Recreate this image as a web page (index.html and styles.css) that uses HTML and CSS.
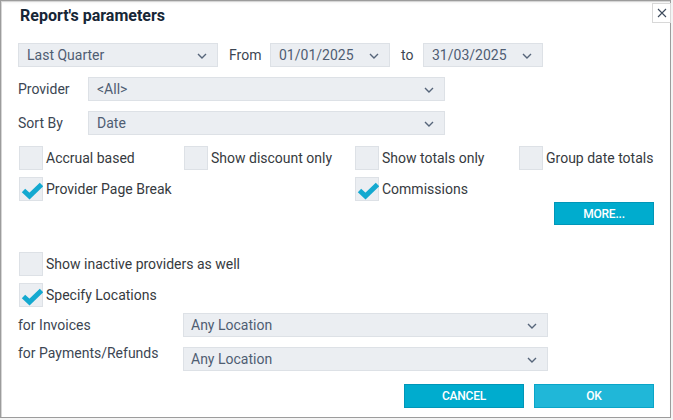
FILE: index.html
```html
<!DOCTYPE html>
<html>
<head>
<meta charset="utf-8">
<link rel="stylesheet" href="styles.css">
</head>
<body>
<div class="dialog">
  <button class="close" aria-label="Close">
    <svg width="10" height="10" viewBox="0 0 10 10"><path d="M1 1L9 9M9 1L1 9" stroke="#3d4a5c" stroke-width="1.1" fill="none"/></svg>
  </button>
  <div class="title">Report's parameters</div>

  <div class="row row1">
    <div class="select w-period"><span>Last Quarter</span><svg class="chev" width="10" height="6" viewBox="0 0 10 6"><path d="M1 1L5 5L9 1" stroke="#56657a" stroke-width="1.4" fill="none"/></svg></div>
    <span class="lbl-from">From</span>
    <div class="select w-date"><span>01/01/2025</span><svg class="chev" width="10" height="6" viewBox="0 0 10 6"><path d="M1 1L5 5L9 1" stroke="#56657a" stroke-width="1.4" fill="none"/></svg></div>
    <span class="lbl-to">to</span>
    <div class="select w-date"><span>31/03/2025</span><svg class="chev" width="10" height="6" viewBox="0 0 10 6"><path d="M1 1L5 5L9 1" stroke="#56657a" stroke-width="1.4" fill="none"/></svg></div>
  </div>

  <div class="row row-provider">
    <span class="lbl-field">Provider</span>
    <div class="select w-wide"><span>&lt;All&gt;</span><svg class="chev" width="10" height="6" viewBox="0 0 10 6"><path d="M1 1L5 5L9 1" stroke="#56657a" stroke-width="1.4" fill="none"/></svg></div>
  </div>

  <div class="row row-sort">
    <span class="lbl-field">Sort By</span>
    <div class="select w-wide"><span>Date</span><svg class="chev" width="10" height="6" viewBox="0 0 10 6"><path d="M1 1L5 5L9 1" stroke="#56657a" stroke-width="1.4" fill="none"/></svg></div>
  </div>

  <div class="checks">
    <label class="cb"><span class="box"></span><span>Accrual based</span></label>
    <label class="cb"><span class="box"></span><span>Show discount only</span></label>
    <label class="cb"><span class="box"></span><span>Show totals only</span></label>
    <label class="cb"><span class="box"></span><span>Group date totals</span></label>
    <label class="cb"><span class="box"><svg width="24" height="24" viewBox="0 0 24 24"><path d="M4.5 13.5L10.5 19L22.5 7.5" stroke="#14a9d0" stroke-width="5" fill="none"/></svg></span><span>Provider Page Break</span></label>
    <span></span>
    <label class="cb"><span class="box"><svg width="24" height="24" viewBox="0 0 24 24"><path d="M4.5 13.5L10.5 19L22.5 7.5" stroke="#14a9d0" stroke-width="5" fill="none"/></svg></span><span>Commissions</span></label>
    <span></span>
  </div>

  <div class="more-row">
    <button class="btn btn-more">MORE...</button>
  </div>

  <label class="cb cb-single inactive"><span class="box"></span><span>Show inactive providers as well</span></label>
  <label class="cb cb-single specify"><span class="box"><svg width="24" height="24" viewBox="0 0 24 24"><path d="M4.5 13.5L10.5 19L22.5 7.5" stroke="#14a9d0" stroke-width="5" fill="none"/></svg></span><span>Specify Locations</span></label>

  <div class="row loc-row loc-inv">
    <span class="lbl-loc">for Invoices</span>
    <div class="select w-loc"><span>Any Location</span><svg class="chev" width="10" height="6" viewBox="0 0 10 6"><path d="M1 1L5 5L9 1" stroke="#56657a" stroke-width="1.4" fill="none"/></svg></div>
  </div>
  <div class="row loc-row loc-pay">
    <span class="lbl-loc lbl-top">for Payments/Refunds</span>
    <div class="select w-loc"><span>Any Location</span><svg class="chev" width="10" height="6" viewBox="0 0 10 6"><path d="M1 1L5 5L9 1" stroke="#56657a" stroke-width="1.4" fill="none"/></svg></div>
  </div>

  <div class="actions">
    <button class="btn btn-cancel">CANCEL</button>
    <button class="btn btn-ok">OK</button>
  </div>
</div>
</body>
</html>
```
FILE: styles.css
```css
html, body {
  margin: 0;
  padding: 0;
  background: #f4f4f4;
}
body {
  font-family: Roboto, "Liberation Sans", Arial, sans-serif;
  font-size: 14px;
  color: #363a40;
}
.dialog {
  position: relative;
  box-sizing: border-box;
  width: 671px;
  height: 418px;
  background: #fff;
  border: 1px solid #9c9c9c;
  box-shadow: inset 1px 1px 0 #d6d6d6, inset 0 3px 3px -2px #e6e6e6;
  padding: 0 16px 0 17px;
}
.close {
  position: absolute;
  top: 2px;
  right: -1px;
  width: 19px;
  height: 20px;
  border: 1px solid #d8d8d8;
  background: #fff;
  padding: 0;
  display: flex;
  align-items: center;
  justify-content: center;
}
.title {
  height: 42px;
  box-sizing: border-box;
  padding: 5px 0 0 2px;
  font-size: 16px;
  font-weight: 700;
  line-height: 20px;
  color: #162636;
}
.row {
  display: flex;
  align-items: center;
}
.select {
  box-sizing: border-box;
  height: 24px;
  background: #ebeef2;
  border: 1px solid #dde1e6;
  display: flex;
  align-items: center;
  justify-content: space-between;
  padding: 0 10px 0 8px;
  color: #4f5d72;
  font-size: 14px;
}
.chev { flex: none; margin-top: 1px; }
.w-period { width: 200px; }
.w-date { width: 120px; padding-left: 8px; }
.w-wide { width: 357px; }
.w-loc { width: 365px; padding-left: 7px; }
.lbl-from { width: 41px; margin-left: 11px; color: #3c4653; }
.lbl-to { width: 22px; margin-left: 11px; color: #3c4653; }
.lbl-field { width: 70px; color: #3c4653; }
.lbl-loc { width: 165px; color: #3c4653; }
.lbl-top { align-self: flex-start; margin-top: -2px; }
.row-provider { margin-top: 10px; }
.row-sort { margin-top: 10px; }
.checks {
  margin-top: 11px;
  padding-left: 1px;
  display: grid;
  grid-template-columns: 165px 171px 164px 1fr;
  row-gap: 7px;
}
.cb {
  display: flex;
  align-items: center;
  color: #363a40;
  white-space: nowrap;
}
.box {
  box-sizing: border-box;
  width: 24px;
  height: 24px;
  flex: none;
  background: #ebeef2;
  border: 1px solid #dde1e6;
  margin-right: 3px;
  position: relative;
}
.box svg {
  position: absolute;
  left: -1px;
  top: -1px;
}
.more-row {
  display: flex;
  justify-content: flex-end;
  margin-top: 1px;
}
.btn {
  box-sizing: border-box;
  border: 1px solid #0096b8;
  color: #fff;
  font-family: Roboto, "Liberation Sans", Arial, sans-serif;
  font-size: 12px;
  font-weight: 500;
  padding: 0;
  letter-spacing: -0.2px;
}
.btn-more {
  width: 100px;
  height: 23px;
  background: #00acce;
}
.cb-single { padding-left: 1px; }
.inactive { margin-top: 27px; }
.specify { margin-top: 7px; }
.loc-inv { margin-top: 6px; }
.loc-pay { margin-top: 10px; }
.actions {
  display: flex;
  justify-content: flex-end;
  gap: 10px;
  margin-top: 13px;
}
.btn-cancel {
  width: 120px;
  height: 24px;
  background: #00acce;
}
.btn-ok {
  width: 120px;
  height: 24px;
  background: #20b7d8;
  border-color: #0aa5c8;
}
```
